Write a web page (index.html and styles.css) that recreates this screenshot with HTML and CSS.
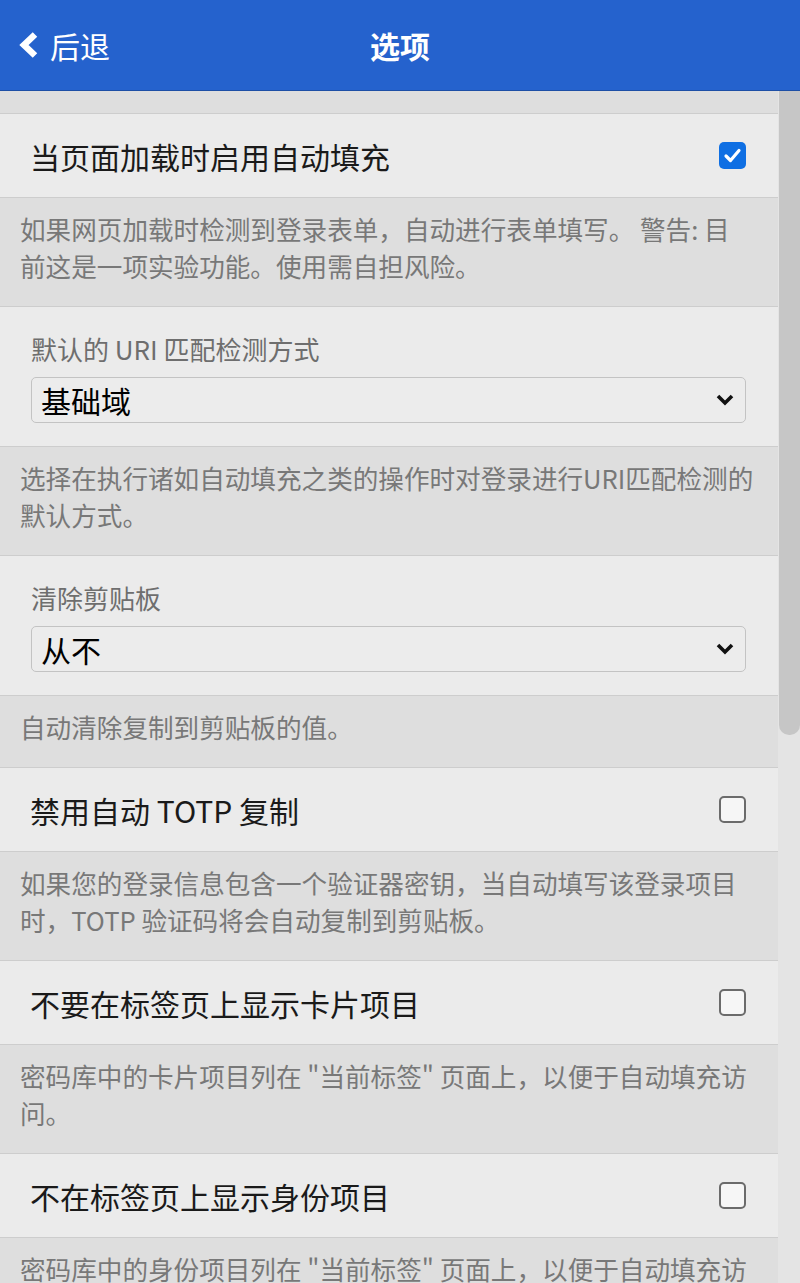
FILE: index.html
```html
<!DOCTYPE html>
<html lang="zh-CN">
<head>
<meta charset="utf-8">
<title>选项</title>
<link rel="stylesheet" href="styles.css">
</head>
<body>
<header class="topbar">
  <div class="back">
    <svg class="back-icon" width="22" height="28" viewBox="0 0 22 28"><path d="M17 3.5 L6 14 L17 24.5" fill="none" stroke="#fff" stroke-width="6.5" stroke-linejoin="miter"/></svg>
    <span>后退</span>
  </div>
  <h1 class="title">选项</h1>
  <div class="spacer"></div>
</header>
<div class="main">
  <div class="content">
    <section class="box">
      <div class="row row-check">
        <span class="label">当页面加载时启用自动填充</span>
        <span class="cb cb-on"><svg width="27" height="27" viewBox="0 0 27 27"><path d="M7 14 L11.5 18.5 L20 8.5" fill="none" stroke="#fff" stroke-width="3.2" stroke-linecap="round" stroke-linejoin="round"/></svg></span>
      </div>
    </section>
    <p class="footer">如果网页加载时检测到登录表单，自动进行表单填写。 警告: 目前这是一项实验功能。使用需自担风险。</p>

    <section class="box">
      <div class="row row-select">
        <span class="sel-label">默认的 URI 匹配检测方式</span>
        <div class="select"><span>基础域</span><svg width="20" height="14" viewBox="0 0 20 14"><path d="M3 3 L10 10 L17 3" fill="none" stroke="#111" stroke-width="3.6"/></svg></div>
      </div>
    </section>
    <p class="footer">选择在执行诸如自动填充之类的操作时对登录进行URI匹配检测的默认方式。</p>

    <section class="box">
      <div class="row row-select">
        <span class="sel-label">清除剪贴板</span>
        <div class="select"><span>从不</span><svg width="20" height="14" viewBox="0 0 20 14"><path d="M3 3 L10 10 L17 3" fill="none" stroke="#111" stroke-width="3.6"/></svg></div>
      </div>
    </section>
    <p class="footer">自动清除复制到剪贴板的值。</p>

    <section class="box">
      <div class="row row-check">
        <span class="label">禁用自动 TOTP 复制</span>
        <span class="cb"></span>
      </div>
    </section>
    <p class="footer">如果您的登录信息包含一个验证器密钥，当自动填写该登录项目时，TOTP 验证码将会自动复制到剪贴板。</p>

    <section class="box">
      <div class="row row-check">
        <span class="label">不要在标签页上显示卡片项目</span>
        <span class="cb"></span>
      </div>
    </section>
    <p class="footer">密码库中的卡片项目列在 "当前标签" 页面上，以便于自动填充访问。</p>

    <section class="box">
      <div class="row row-check">
        <span class="label">不在标签页上显示身份项目</span>
        <span class="cb"></span>
      </div>
    </section>
    <p class="footer">密码库中的身份项目列在 "当前标签" 页面上，以便于自动填充访问。</p>
  </div>
  <div class="scrollbar"><div class="thumb"></div></div>
</div>
</body>
</html>
```

FILE: styles.css
```css
* { box-sizing: border-box; }
html, body {
  margin: 0;
  padding: 0;
  height: 1283px;
  overflow: hidden;
}
body {
  background: #dedede;
  font-family: "Noto Sans CJK SC", "Noto Sans", sans-serif;
  color: #1a1a1a;
}
.topbar {
  height: 91px;
  background: #2562cd;
  border-bottom: 1px solid #1d4fa6;
  display: grid;
  grid-template-columns: 1fr auto 1fr;
  align-items: center;
  color: #fff;
}
.back {
  display: flex;
  align-items: center;
  padding-left: 18px;
  font-size: 30px;
  gap: 10px;
}
.back-icon { display: block; }
.title {
  margin: 0;
  font-size: 30px;
  font-weight: 700;
}
.main {
  display: flex;
  height: 1192px;
}
.content {
  width: 778px;
  padding-top: 22px;
}
.scrollbar {
  width: 22px;
  background: #e4e4e4;
}
.thumb {
  height: 644px;
  background: #c6c6c6;
  margin-left: 1px;
  border-radius: 0 0 10px 10px;
}
.box {
  background: #ebebeb;
  border-top: 1px solid #cdcdcd;
  border-bottom: 1px solid #cdcdcd;
}
.row-check {
  height: 83px;
  display: flex;
  align-items: center;
  justify-content: space-between;
  padding: 0 32px 0 30px;
}
.label {
  font-size: 30px;
  line-height: 42px;
  padding-top: 1px;
}
.cb {
  width: 27px;
  height: 27px;
  border: 2px solid #6b6b6b;
  border-radius: 5px;
  background: #f6f6f6;
  display: block;
}
.cb-on {
  border: none;
  background: #0f6fe3;
}
.cb-on svg { display: block; }
.row-select {
  display: flex;
  flex-direction: column;
  padding: 23px 32px 23px 31px;
}
.sel-label {
  font-size: 26px;
  line-height: 37px;
  color: #6e6e6e;
  margin-bottom: 10px;
}
.select {
  height: 46px;
  border: 1px solid #c3c3c3;
  border-radius: 5px;
  background: #ececec;
  display: flex;
  align-items: center;
  justify-content: space-between;
  padding: 0 10px 0 9px;
  font-size: 30px;
  color: #000;
}
.select svg { display: block; }
.footer {
  margin: 0;
  padding: 12px 24px 22px 20px;
  font-size: 25.6px;
  line-height: 37px;
  color: #787878;
}
```
